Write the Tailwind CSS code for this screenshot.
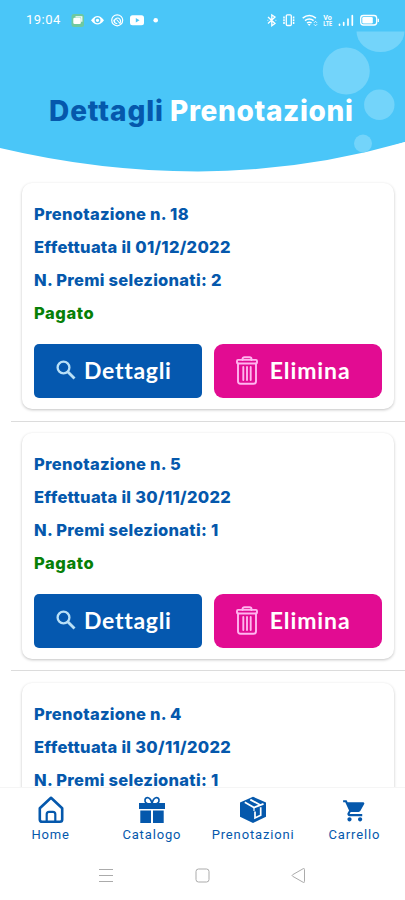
<!DOCTYPE html>
<html lang="it">
<head>
<meta charset="utf-8">
<meta name="viewport" content="width=device-width, initial-scale=1">
<title>Dettagli Prenotazioni</title>
<script src="https://cdn.jsdelivr.net/npm/@tailwindcss/browser@4"></script>
</head>
<body class="bg-white">
<svg class="hidden">
  <symbol id="search" viewBox="0 0 20 20"><circle cx="7.500" cy="7.500" r="5.900" fill="none" stroke="#b9e0f7" stroke-width="2.300"/><path d="M12 12l6.500 6.500" stroke="#b9e0f7" stroke-width="2.800"/></symbol>
  <symbol id="trash" viewBox="0 0 22 29"><g fill="none" stroke="#ffb5ef" stroke-width="1.900" stroke-linejoin="round" stroke-linecap="round"><path d="M6.500 4V3q0-1.800 2-1.800h5q2 0 2 1.800v1"/><rect x="1" y="3.900" width="20" height="3.600" rx="1"/><path d="M2 7.500v17.800q0 2.500 2.500 2.500h13q2.500 0 2.500-2.500V7.500M7.300 11v13M11 11v13M14.700 11v13"/></g></symbol>
</svg>
<div class="w-[405px] h-[900px] overflow-hidden flex flex-col bg-white text-[#0558ac]">
  <header class="relative h-[172px] shrink-0">
    <svg class="absolute inset-0" width="405" height="172" viewBox="0 0 405 172">
      <path d="M0 0H405V142Q301.500 171.400 198 171.400Q99 171.400 0 148Z" fill="#4ac6f8"/>
      <g fill="#73d4fa"><path d="M356.500 31.500H404.500A24 20.500 0 0 1 356.500 31.500Z"/><circle cx="346.300" cy="71" r="23.500"/><circle cx="379.300" cy="104.700" r="15.200"/><circle cx="363" cy="143.500" r="9"/></g>
      <path d="M345 158.800Q375 152 405 142V172H345Z" fill="#fff"/>
    </svg>
    <div class="relative h-10 flex items-center pl-[26px] text-white">
      <span class="font-['Roboto',sans-serif] text-[13px] tracking-[0.5px] w-[42px] whitespace-nowrap">19:04</span>
      <svg width="337" height="40" viewBox="68 0 337 40" fill="none" stroke="#fff">
        <rect x="71.500" y="14" width="12.500" height="13" rx="2.500" fill="#6dc9a0" stroke="none"/>
        <rect x="73.300" y="17.700" width="7.500" height="6.300" rx="1.300" fill="#fff" stroke="none"/><path d="M75.500 16.800h6.300v5" stroke-width="1.200"/>
        <path d="M91 20.300q6.500-8.600 13 0q-6.500 8.600-13 0z" fill="#fff" stroke="none"/><circle cx="97.500" cy="20.300" r="2.300" stroke="#4ac6f8" stroke-width="1.300"/>
        <circle cx="117.200" cy="20.300" r="5.500" stroke-width="1.200"/><path d="M115 22.800a3 3 0 1 1 4.600.5M116.500 19.500l4 4.500M113.800 19.800q0 3.500 3.500 4" stroke-width="1.100"/>
        <rect x="130" y="15.300" width="14" height="10" rx="2.500" fill="#fff" stroke="none"/><path d="M135.800 18.100l3.700 2.200-3.700 2.200z" fill="#4ac6f8" stroke="none"/>
        <circle cx="155.700" cy="20.300" r="2.300" fill="#fff" stroke="none"/>
        <path d="M268 17l7 6.500-3.200 2.300V15l3.200 2-7 6.500" stroke-width="1.300"/><path d="M267.500 20.300h.8M275.500 20.300h.8"/>
        <rect x="286.300" y="14.800" width="5" height="10.700" rx="1" stroke-width="1.300"/><path d="M284 16.500v7.500M293.600 16.500v7.500" stroke-width="1.500" stroke-dasharray="2 .7"/>
        <path d="M302.700 18.200q6.600-5.300 13.200 0M305 20.700q4.300-3.200 8.600 0M307 23q2.300-1.600 4.600 0" stroke-width="1.500"/><path d="M307.700 24h3l-1.500 2z" fill="#fff" stroke="none"/><path d="M314 22.800l1.500-1.500 1.500 1.500M314 24.300l1.500 1.500 1.500-1.500" stroke-width=".9"/>
        <g fill="#fff" stroke="none" font-family="Roboto, sans-serif" font-weight="700" font-size="7.500"><text x="323.300" y="19.500" textLength="8.500" lengthAdjust="spacingAndGlyphs">Vo</text><text x="323.300" y="26.300" textLength="8.800" lengthAdjust="spacingAndGlyphs">LTE</text></g>
        <g stroke-width="1.700" stroke-linecap="round"><path d="M339.500 24.300v.8M343.700 22.500v2.600M348 19v6.100M352.300 15.700v9.400"/></g>
        <rect x="360.700" y="15.500" width="16" height="9.500" rx="2.700" stroke-width="1.300"/><rect x="362.300" y="17" width="10.500" height="6.500" rx="1.300" fill="#fff" stroke="none"/><path d="M378.300 18.700v3.300" stroke-width="1.300"/>
      </svg>
    </div>
    <h1 class="relative mt-[51px] flex h-10 items-center pl-[49px] whitespace-nowrap font-['Inter',sans-serif] text-[28px] font-extrabold"><span class="w-[121px] tracking-[0.900px]">Dettagli</span><span class="text-white tracking-[0.650px]">Prenotazioni</span></h1>
  </header>

  <main id="list" class="h-[615px] shrink-0 overflow-hidden pt-[11px]"></main>

  <nav class="relative h-[62px] shrink-0 bg-white border-t border-[#f5f5f5] grid grid-cols-4 font-['Roboto',sans-serif] text-[13px] leading-4 text-center tracking-[0.85px]">
    <a class="flex flex-col items-center pt-[8px]"><svg width="26" height="28" viewBox="0 0 26 28" fill="none" stroke="#0558ac" stroke-width="2.600" stroke-linejoin="round"><path d="M1.800 12.300L13 1.800l11.200 10.500v11.200q0 2.300-2.300 2.300H4.100q-2.300 0-2.300-2.300z"/><path d="M8.700 25.800v-7.500q0-2.400 2.400-2.400h3.800q2.400 0 2.400 2.400v7.500" stroke-width="2.200"/></svg><span class="mt-[3px]">Home</span></a>
    <a class="flex flex-col items-center pt-[8px]"><svg width="26" height="28" viewBox="0 0 26 28" fill="#0558ac"><path d="M0 7h26v6H0zM1.300 14.500H12V27H1.300zM14 14.500h10.700V27H14z"/><path d="M13 7.500C8 9 5.500 6.500 6 3.800C6.500.5 11.500.3 13 7.500C14.500.3 19.500.5 20 3.800C20.500 6.500 18 9 13 7.500z" fill="#fff" stroke="#0558ac" stroke-width="1.700"/></svg><span class="mt-[3px]">Catalogo</span></a>
    <a class="flex flex-col items-center pt-[8px]"><svg width="26" height="28" viewBox="0 0 26 28"><path d="M13 .8L26 6.500V20.700L13 27L0 20.700V6.500z" fill="#0558ac"/><path d="M4.800 6.300L14 11.500l9.500-3.700M10.300 3.600L19.800 8.700" fill="none" stroke="#fff" stroke-width="1.800"/><path d="M14 12v3" stroke="#fff" stroke-width="1.200"/><path d="M15 15.500v6.500l5.700-2.700v-8" fill="none" stroke="#fff" stroke-width="1.700"/></svg><span class="mt-[3px]">Prenotazioni</span></a>
    <a class="flex flex-col items-center pt-[8px]"><svg width="26" height="28" viewBox="-1 -2 24.500 26.400" fill="#0558ac"><path d="M7 18c-1.100 0-1.990.9-1.990 2S5.900 22 7 22s2-.9 2-2-.9-2-2-2zM1 2v2h2l3.600 7.590-1.350 2.450c-.16.280-.25.610-.25.960 0 1.100.9 2 2 2h12v-2H7.420c-.14 0-.25-.11-.25-.25l.03-.12.900-1.630h7.450c.75 0 1.410-.41 1.750-1.030l3.580-6.490A1 1 0 0 0 20 4H5.210l-.94-2H1zm16 16c-1.100 0-1.990.9-1.990 2s.89 2 1.990 2 2-.9 2-2-.9-2-2-2z"/></svg><span class="mt-[3px]">Carrello</span></a>
  </nav>
  <footer class="grow flex bg-white"><svg width="405" height="51" viewBox="0 849 405 51" fill="none" stroke="#ababab" stroke-width="1"><path d="M99 869.500h14M99 875.500h14M99 881.500h14"/><rect x="196" y="869" width="13" height="13" rx="2.500"/><path d="M304.500 869.500v12q0 1.500-1.300.8l-10.500-6q-1.200-.8 0-1.600l10.500-6q1.300-.6 1.300.8z"/></svg></footer>
</div>
<script>
const bookings = [
  { n: '18', date: '01/12/2022', prizes: 2, status: 'Pagato' },
  { n: '5', date: '30/11/2022', prizes: 1, status: 'Pagato' },
  { n: '4', date: '30/11/2022', prizes: 1 }
];
document.getElementById('list').innerHTML = bookings.map(b => `
  <section class="h-[249.800px]">
    <article class="ml-[22px] w-[372px] h-[226px] rounded-[10px] bg-white shadow-[0_1px_3px_rgba(0,0,0,0.240)] px-3 pt-[15px]">
      <div class="font-['Inter',sans-serif] font-extrabold text-[16.500px] leading-[33.100px] tracking-[0.280px] whitespace-nowrap">
        <p>Prenotazione n. ${b.n}</p>
        <p>Effettuata il ${b.date}</p>
        <p>N. Premi selezionati: ${b.prizes}</p>
        ${b.status ? `<p class="text-[#078007] tracking-[0.600px]">${b.status}</p>` : ''}
      </div>
      ${b.status ? `<div class="mt-[13.400px] flex gap-[11.500px] font-['Lato',sans-serif] font-bold text-[23px] tracking-[0.7px] text-white">
        <button class="h-[54px] w-[168.500px] rounded-[5px] bg-[#0558af] flex items-center pl-[22px] pb-px"><svg class="w-5 h-5 mr-[8px]"><use href="#search"/></svg>Dettagli</button>
        <button class="h-[54px] w-[168.500px] rounded-[9px] bg-[#e20c92] flex items-center pl-[22px] pb-px tracking-[0.900px]"><svg class="w-[22px] h-[29px] mr-[12px]"><use href="#trash"/></svg>Elimina</button>
      </div>` : ''}
    </article>
    <div class="mt-[11.500px] ml-[11px] h-px bg-[#dcdcdc]"></div>
  </section>`).join('');
</script>
</body>
</html>
